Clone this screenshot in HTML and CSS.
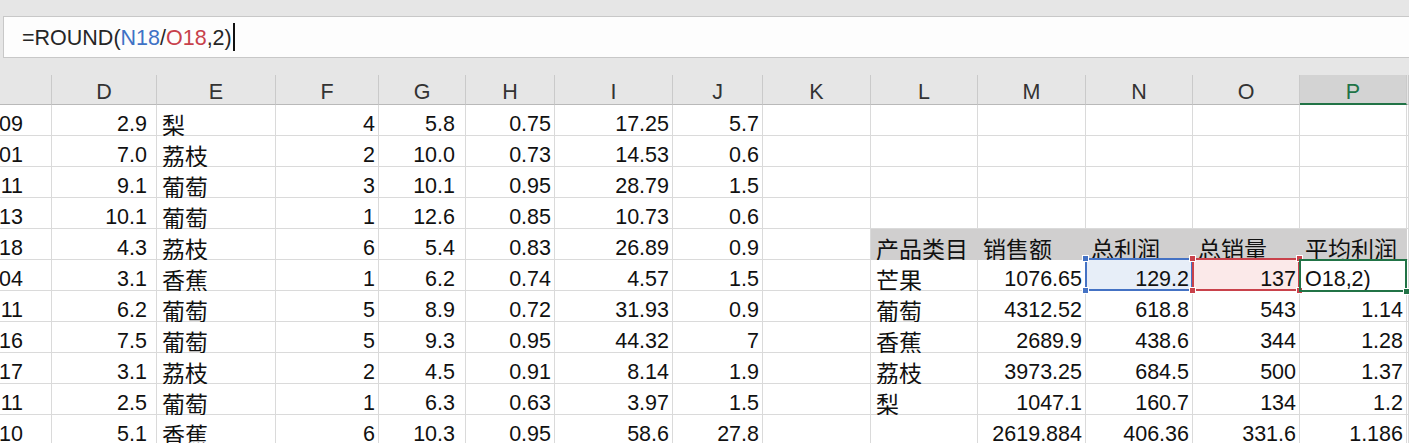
FILE: index.html
```html
<!DOCTYPE html>
<html lang="zh">
<head>
<meta charset="utf-8">
<title>Sheet</title>
<link rel="stylesheet" href="styles.css">
</head>
<body>
<div class="topbar">
  <div class="formula">=ROUND(<span class="ref-n">N18</span>/<span class="ref-o">O18</span>,2)<span class="caret"></span></div>
</div>
<div class="sheet">
  <div class="row head">
    <div class="h"></div><div class="h">D</div><div class="h">E</div><div class="h">F</div><div class="h">G</div><div class="h">H</div><div class="h">I</div><div class="h">J</div><div class="h">K</div><div class="h">L</div><div class="h">M</div><div class="h">N</div><div class="h">O</div><div class="h on">P</div><div class="h"></div>
  </div>
  <div class="row">
    <div class="c n cc">09</div><div class="c n fd">2.9</div><div class="c t zh">梨</div><div class="c n">4</div><div class="c n fg">5.8</div><div class="c n">0.75</div><div class="c n">17.25</div><div class="c n">5.7</div><div class="c"></div><div class="c"></div><div class="c"></div><div class="c"></div><div class="c"></div><div class="c"></div><div class="c"></div>
  </div>
  <div class="row">
    <div class="c n cc">01</div><div class="c n fd">7.0</div><div class="c t zh">荔枝</div><div class="c n">2</div><div class="c n fg">10.0</div><div class="c n">0.73</div><div class="c n">14.53</div><div class="c n">0.6</div><div class="c"></div><div class="c"></div><div class="c"></div><div class="c"></div><div class="c"></div><div class="c"></div><div class="c"></div>
  </div>
  <div class="row">
    <div class="c n cc">11</div><div class="c n fd">9.1</div><div class="c t zh">葡萄</div><div class="c n">3</div><div class="c n fg">10.1</div><div class="c n">0.95</div><div class="c n">28.79</div><div class="c n">1.5</div><div class="c"></div><div class="c"></div><div class="c"></div><div class="c"></div><div class="c"></div><div class="c"></div><div class="c"></div>
  </div>
  <div class="row">
    <div class="c n cc">13</div><div class="c n fd">10.1</div><div class="c t zh">葡萄</div><div class="c n">1</div><div class="c n fg">12.6</div><div class="c n">0.85</div><div class="c n">10.73</div><div class="c n">0.6</div><div class="c"></div><div class="c"></div><div class="c"></div><div class="c"></div><div class="c"></div><div class="c"></div><div class="c"></div>
  </div>
  <div class="row">
    <div class="c n cc">18</div><div class="c n fd">4.3</div><div class="c t zh">荔枝</div><div class="c n">6</div><div class="c n fg">5.4</div><div class="c n">0.83</div><div class="c n">26.89</div><div class="c n">0.9</div><div class="c"></div><div class="c t zh band">产品类目</div><div class="c t zh band">销售额</div><div class="c t zh band">总利润</div><div class="c t zh band">总销量</div><div class="c t zh band">平均利润</div><div class="c"></div>
  </div>
  <div class="row">
    <div class="c n cc">04</div><div class="c n fd">3.1</div><div class="c t zh">香蕉</div><div class="c n">1</div><div class="c n fg">6.2</div><div class="c n">0.74</div><div class="c n">4.57</div><div class="c n">1.5</div><div class="c"></div><div class="c t zh">芒果</div><div class="c n">1076.65</div>
    <div class="c n sel sel-n">129.2<i class="frame blue"><b class="hd tl"></b><b class="hd tr"></b><b class="hd bl"></b><b class="hd br"></b></i></div>
    <div class="c n sel sel-o">137<i class="frame red"><b class="hd tl"></b><b class="hd tr"></b><b class="hd bl"></b><b class="hd br"></b></i></div>
    <div class="c t sel">O18,2)<i class="frame green"><b class="hd fill"></b></i></div>
    <div class="c"></div>
  </div>
  <div class="row">
    <div class="c n cc">11</div><div class="c n fd">6.2</div><div class="c t zh">葡萄</div><div class="c n">5</div><div class="c n fg">8.9</div><div class="c n">0.72</div><div class="c n">31.93</div><div class="c n">0.9</div><div class="c"></div><div class="c t zh">葡萄</div><div class="c n">4312.52</div><div class="c n">618.8</div><div class="c n">543</div><div class="c n">1.14</div><div class="c"></div>
  </div>
  <div class="row">
    <div class="c n cc">16</div><div class="c n fd">7.5</div><div class="c t zh">葡萄</div><div class="c n">5</div><div class="c n fg">9.3</div><div class="c n">0.95</div><div class="c n">44.32</div><div class="c n">7</div><div class="c"></div><div class="c t zh">香蕉</div><div class="c n">2689.9</div><div class="c n">438.6</div><div class="c n">344</div><div class="c n">1.28</div><div class="c"></div>
  </div>
  <div class="row">
    <div class="c n cc">17</div><div class="c n fd">3.1</div><div class="c t zh">荔枝</div><div class="c n">2</div><div class="c n fg">4.5</div><div class="c n">0.91</div><div class="c n">8.14</div><div class="c n">1.9</div><div class="c"></div><div class="c t zh">荔枝</div><div class="c n">3973.25</div><div class="c n">684.5</div><div class="c n">500</div><div class="c n">1.37</div><div class="c"></div>
  </div>
  <div class="row">
    <div class="c n cc">11</div><div class="c n fd">2.5</div><div class="c t zh">葡萄</div><div class="c n">1</div><div class="c n fg">6.3</div><div class="c n">0.63</div><div class="c n">3.97</div><div class="c n">1.5</div><div class="c"></div><div class="c t zh">梨</div><div class="c n">1047.1</div><div class="c n">160.7</div><div class="c n">134</div><div class="c n">1.2</div><div class="c"></div>
  </div>
  <div class="row">
    <div class="c n cc">10</div><div class="c n fd">5.1</div><div class="c t zh">香蕉</div><div class="c n">6</div><div class="c n fg">10.3</div><div class="c n">0.95</div><div class="c n">58.6</div><div class="c n">27.8</div><div class="c"></div><div class="c"></div><div class="c n">2619.884</div><div class="c n">406.36</div><div class="c n">331.6</div><div class="c n">1.186</div><div class="c"></div>
  </div>
</div>
</body>
</html>
```
FILE: styles.css
```css
html, body {
  margin: 0;
  padding: 0;
}
body {
  width: 1409px;
  height: 443px;
  overflow: hidden;
  background: #e6e6e6;
  font-family: "Liberation Sans", "Noto Sans CJK SC", sans-serif;
  font-size: 21.5px;
  color: #111;
}
.topbar {
  height: 75px;
  box-sizing: border-box;
  padding: 16px 0 0 3px;
}
.formula {
  height: 42px;
  box-sizing: border-box;
  border: 1px solid #c8c8c8;
  border-right: 0;
  background: #fdfdfd;
  padding: 1px 0 0 18px;
  line-height: 40px;
  color: #262626;
  white-space: nowrap;
}
.ref-n { color: #3f72c5; }
.ref-o { color: #c8414b; }
.caret {
  display: inline-block;
  width: 0;
  height: 28px;
  border-left: 2px solid #111;
  margin-left: 1px;
  vertical-align: -6px;
}
.sheet {
  width: 1409px;
}
.row {
  display: grid;
  grid-template-columns: 52px 105px 119px 103px 87px 89px 118px 90px 108px 107px 108px 107px 107px 107px 1fr;
  height: 31px;
}
.row.head {
  height: 30px;
}
.h {
  display: flex;
  align-items: flex-end;
  justify-content: center;
  box-sizing: border-box;
  background: #e6e6e6;
  border-right: 1px solid #cacaca;
  border-bottom: 1px solid #b9b9b9;
  line-height: 22px;
  padding-bottom: 1px;
  color: #333;
}
.h.on {
  background: #d3d3d3;
  color: #217346;
  border-bottom: 2px solid #217346;
  padding-bottom: 0;
}
.c {
  display: flex;
  align-items: flex-end;
  box-sizing: border-box;
  background: #fff;
  border-right: 1px solid #dadada;
  border-bottom: 1px solid #dadada;
  line-height: 22px;
  white-space: nowrap;
  position: relative;
  min-width: 0;
}
.n {
  justify-content: flex-end;
  padding-right: 3px;
}
.t {
  padding-left: 5px;
}
.zh {
  font-family: "Noto Sans CJK SC", sans-serif;
  font-size: 23px;
  line-height: 22px;
}
.fd { padding-right: 9px; }
.fg { padding-right: 10px; }
.cc {
  padding-right: 28px;
}
.band {
  background: #d0cfcf;
  border-color: #d0cfcf;
}
.sel-n { background: #e7eef8; }
.sel-o { background: #fbe9e9; }
.frame {
  position: absolute;
  top: -2px;
  left: -1px;
  right: -1px;
  bottom: -1px;
  border: 2px solid currentColor;
  z-index: 3;
}
.frame.blue { color: #4472c4; }
.frame.red { color: #c9424b; }
.frame.green {
  color: #217346;
  top: -1px;
  bottom: -2px;
  z-index: 4;
}
.hd {
  position: absolute;
  width: 5px;
  height: 5px;
  border: 1px solid #fff;
  background: currentColor;
}
.hd.tl { top: -5px; left: -5px; }
.hd.tr { top: -5px; right: -5px; }
.hd.bl { bottom: -5px; left: -5px; }
.hd.br { bottom: -5px; right: -5px; }
.hd.fill { bottom: -5px; right: -5px; }
```
